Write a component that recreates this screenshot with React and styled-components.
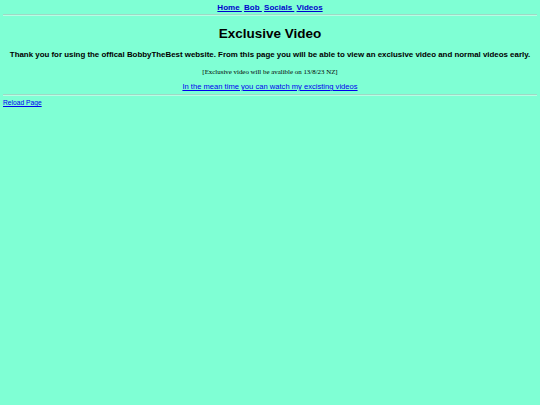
import styled, { createGlobalStyle } from 'styled-components';

const GlobalStyle = createGlobalStyle`
  html, body {
    margin: 0;
    padding: 0;
    background-color: #7fffd4;
  }
  body {
    padding: 0 3px;
    font-family: "Liberation Sans", Arial, sans-serif;
  }
`;

const Nav = styled.nav`
  text-align: center;
  padding-top: 3px;
  font-size: 8px;
  line-height: 10px;
  font-weight: bold;
`;

const NavLink = styled.a`
  color: #0000cc;
  text-decoration: underline;
  white-space: pre;
`;

const Rule = styled.hr`
  margin: ${p => p.$top}px 0 0;
  border: none;
  border-top: 1px solid #9ed9c4;
  border-bottom: 1px solid #b8fce4;
`;

const Title = styled.h1`
  text-align: center;
  font-size: 13.5px;
  line-height: 16px;
  margin: 10px 0 0;
  color: #000;
`;

const Intro = styled.p`
  text-align: center;
  font-size: 7.9px;
  font-weight: bold;
  line-height: 10px;
  margin: 8px 0 0;
`;

const Notice = styled.p`
  text-align: center;
  font-family: "Liberation Serif", "Times New Roman", serif;
  font-size: 6.9px;
  line-height: 10px;
  margin: 7px 0 0;
`;

const Centered = styled.p`
  text-align: center;
  font-size: 7.6px;
  line-height: 10px;
  margin: 5px 0 0;
`;

const Link = styled.a`
  color: #0000ee;
  text-decoration: underline;
`;

const Footer = styled.div`
  margin-top: 2px;
  font-size: 6.7px;
  line-height: 10px;
`;

const navItems = ['Home ', 'Bob ', 'Socials ', 'Videos'];

const App = () => (
  <>
    <GlobalStyle />
    <Nav>
      {navItems.map((item, i) => (
        <span key={item}>
          <NavLink href="#">{item}</NavLink>
          {i < navItems.length - 1 ? ' ' : ''}
        </span>
      ))}
    </Nav>
    <Rule $top={1} />
    <Title>Exclusive Video</Title>
    <Intro>
      Thank you for using the offical BobbyTheBest website. From this page you will be able to view an exclusive video and normal videos early.
    </Intro>
    <Notice>[Exclusive video will be avalible on 13/8/23 NZ]</Notice>
    <Centered>
      <Link href="#">In the mean time you can watch my excisting videos</Link>
    </Centered>
    <Rule $top={2} />
    <Footer>
      <Link href="#">Reload Page</Link>
    </Footer>
  </>
);

export default App;
